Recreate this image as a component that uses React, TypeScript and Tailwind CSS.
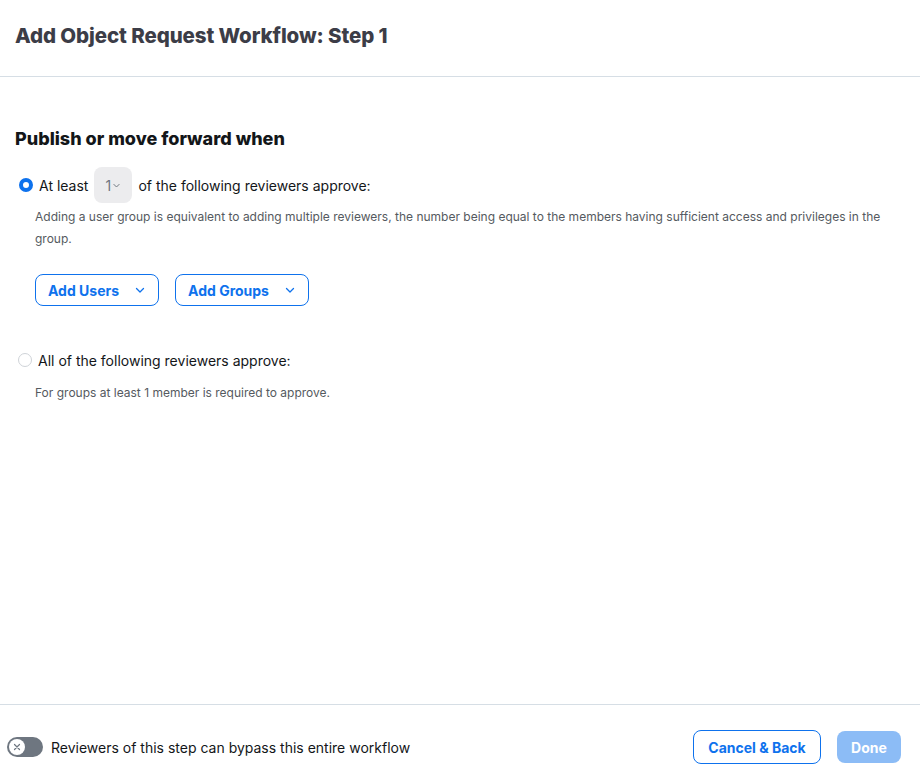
import React from 'react';

const Chevron = ({ className }: { className?: string }) => (
  <svg className={className} viewBox="0 0 12 12" fill="none" xmlns="http://www.w3.org/2000/svg">
    <path d="M2.5 4.5L6 8L9.5 4.5" stroke="currentColor" strokeWidth="1.3" strokeLinecap="round" strokeLinejoin="round" />
  </svg>
);

const App: React.FC = () => {
  return (
    <div className="w-[920px] h-[779px] bg-white flex flex-col text-[#131619]" style={{ fontFamily: 'Inter, "Liberation Sans", sans-serif' }}>
      {/* Header */}
      <div className="h-[77px] border-b border-[#d6dee5] px-[15px] pt-[21px]">
        <h1 className="text-[20.5px] leading-[30px] font-extrabold text-[#3c3d47] tracking-[-0.1px]">Add Object Request Workflow: Step 1</h1>
      </div>

      {/* Body */}
      <div className="flex-1 px-[15px] pt-[50px]">
        <h2 className="text-[18px] leading-[24px] font-extrabold text-[#131619]">Publish or move forward when</h2>

        <div className="mt-[16px] flex items-center h-[36px]">
          <span className="w-[14px] h-[14px] ml-[4px] rounded-full border-[4px] border-[#0e72ed] bg-white" />
          <span className="ml-[6px] text-[14px]">At least</span>
          <span className="ml-[6px] w-[38px] h-[36px] rounded-[8px] bg-[#ececee] flex items-center justify-center gap-[1px] text-[14px] text-[#6e7680]">
            1
            <Chevron className="w-[9px] h-[9px] text-[#6e7680]" />
          </span>
          <span className="ml-[6px] text-[14px]">of the following reviewers approve:</span>
        </div>

        <p className="ml-[20px] mt-[3px] text-[12px] leading-[22px] text-[#555a60] pr-[20px]">
          Adding a user group is equivalent to adding multiple reviewers, the number being equal to the members having sufficient access and privileges in the group.
        </p>

        <div className="ml-[20px] mt-[24px] flex gap-[16px]">
          <button className="h-[32px] w-[124px] rounded-[8px] border border-[#0e72ed] flex items-center justify-center gap-[15px] text-[14px] font-bold text-[#0e72ed]">
            Add Users
            <Chevron className="w-[12px] h-[12px]" />
          </button>
          <button className="h-[32px] w-[134px] rounded-[8px] border border-[#0e72ed] flex items-center justify-center gap-[15px] text-[14px] font-bold text-[#0e72ed]">
            Add Groups
            <Chevron className="w-[12px] h-[12px]" />
          </button>
        </div>

        <div className="mt-[41px] flex items-center h-[26px]">
          <span className="w-[14px] h-[14px] ml-[3px] rounded-full border border-[#cfd3d8] bg-white" />
          <span className="ml-[6px] text-[14px]">All of the following reviewers approve:</span>
        </div>
        <p className="ml-[20px] mt-[12px] text-[12px] leading-[16px] text-[#555a60]">For groups at least 1 member is required to approve.</p>
      </div>

      {/* Footer */}
      <div className="h-[75px] border-t border-[#d6dee5] flex items-center justify-between pl-[7px] pr-[19px] pt-[10px]">
        <div className="flex items-center gap-[8px]">
          <span className="w-[36px] h-[20px] rounded-full bg-[#6e7680] flex items-center p-[2px]">
            <span className="w-[16px] h-[16px] rounded-full bg-white flex items-center justify-center">
              <svg className="w-[8px] h-[8px]" viewBox="0 0 8 8" fill="none">
                <path d="M1.5 1.5L6.5 6.5M6.5 1.5L1.5 6.5" stroke="#6e7680" strokeWidth="1.2" strokeLinecap="round" />
              </svg>
            </span>
          </span>
          <span className="text-[14px] text-[#131619]">Reviewers of this step can bypass this entire workflow</span>
        </div>
        <div className="flex items-center gap-[16px]">
          <button className="h-[34px] w-[128px] rounded-[8px] border border-[#0e72ed] text-[14px] font-bold text-[#0e72ed]">Cancel &amp; Back</button>
          <button className="h-[32px] w-[64px] rounded-[8px] bg-[#8cbcf6] text-[14px] font-bold text-white">Done</button>
        </div>
      </div>
    </div>
  );
};

export default App;
